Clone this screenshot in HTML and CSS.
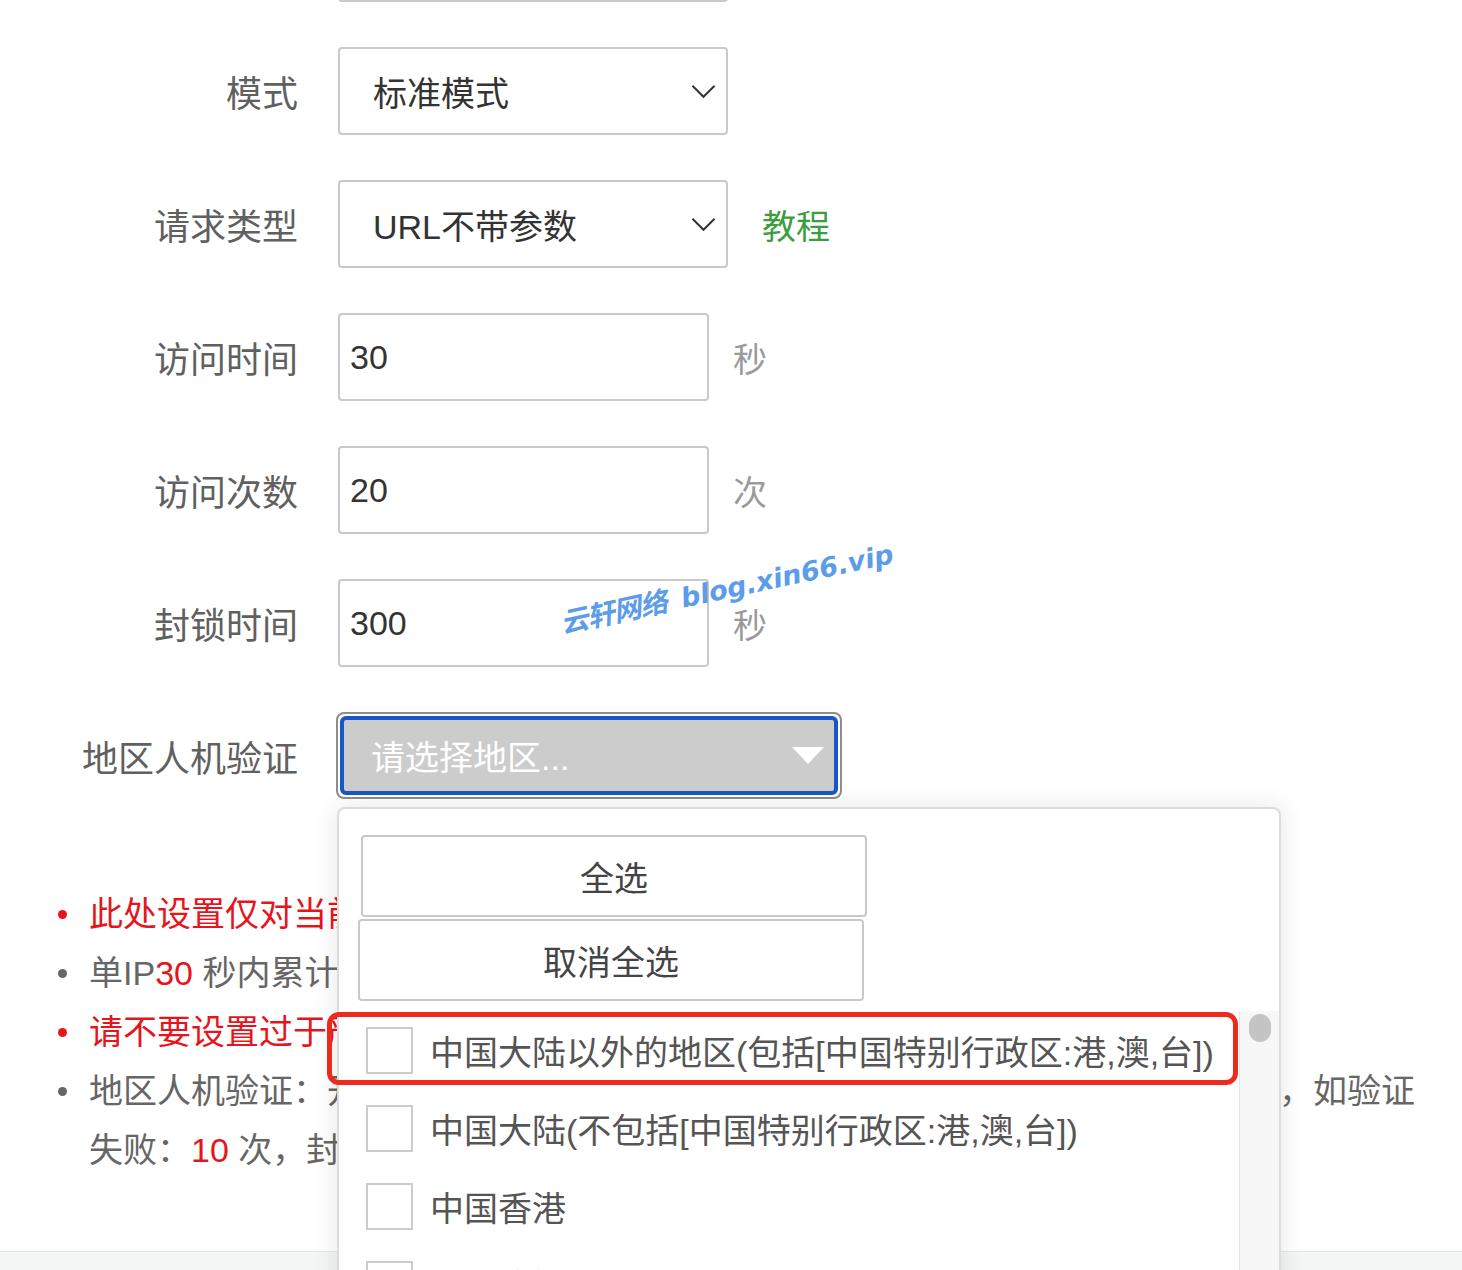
FILE: index.html
```html
<!DOCTYPE html>
<html lang="zh-CN">
<head>
<meta charset="utf-8">
<title>CC防御设置</title>
<link rel="stylesheet" href="styles.css">
</head>
<body>
<div class="page">
  <div class="form">
    <div class="row">
      <span class="label">防御模式</span>
      <div class="select">
        <span class="select-value">自定义</span>
        <svg class="chevron" viewBox="0 0 26 15"><path d="M1.5 1.5 L13 13 L24.5 1.5"/></svg>
      </div>
    </div>
    <div class="row">
      <span class="label">模式</span>
      <div class="select">
        <span class="select-value">标准模式</span>
        <svg class="chevron" viewBox="0 0 26 15"><path d="M1.5 1.5 L13 13 L24.5 1.5"/></svg>
      </div>
    </div>
    <div class="row">
      <span class="label">请求类型</span>
      <div class="select">
        <span class="select-value">URL不带参数</span>
        <svg class="chevron" viewBox="0 0 26 15"><path d="M1.5 1.5 L13 13 L24.5 1.5"/></svg>
      </div>
      <a class="link" href="#">教程</a>
    </div>
    <div class="row">
      <span class="label">访问时间</span>
      <div class="input">30</div>
      <span class="unit">秒</span>
    </div>
    <div class="row">
      <span class="label">访问次数</span>
      <div class="input">20</div>
      <span class="unit">次</span>
    </div>
    <div class="row">
      <span class="label">封锁时间</span>
      <div class="input">300</div>
      <span class="unit">秒</span>
    </div>
    <div class="row row-region">
      <span class="label">地区人机验证</span>
      <div class="region">
        <div class="region-inner">
          <span class="region-placeholder">请选择地区...</span>
          <svg class="caret" viewBox="0 0 32 17"><path d="M0 0 H32 L16 17 Z"/></svg>
        </div>
        <div class="dropdown">
          <div class="dropdown-actions">
            <button class="btn" type="button">全选</button>
            <button class="btn btn-shift" type="button">取消全选</button>
          </div>
          <div class="dropdown-list">
            <ul class="options">
              <li class="option"><span class="checkbox"></span>中国大陆以外的地区(包括[中国特别行政区:港,澳,台])</li>
              <li class="option"><span class="checkbox"></span>中国大陆(不包括[中国特别行政区:港,澳,台])</li>
              <li class="option"><span class="checkbox"></span>中国香港</li>
              <li class="option"><span class="checkbox"></span>中国澳门</li>
            </ul>
            <div class="scrollbar"><span class="thumb"></span></div>
          </div>
          <div class="highlight"></div>
        </div>
      </div>
    </div>
  </div>

  <ul class="notes">
    <li class="red">此处设置仅对当前网站有效，全局设置请前往CC防御页面</li>
    <li>单IP<em>30</em> 秒内累计请求同一URL超过 <em>20</em> 次，封锁 <em>300</em> 秒</li>
    <li class="red">请不要设置过于严格的规则，以免影响正常用户访问网站</li>
    <li>地区人机验证：开启后，所选地区访客访问网站时需要先完成人机验证才可访问，如验证失败：<em>10</em> 次，封锁 <em>600</em> 秒</li>
  </ul>

  <div class="footer"></div>

  <div class="watermark"><span class="wm-cn">云轩网络</span>&nbsp;&nbsp;<span class="wm-en">blog.xin66.vip</span></div>
</div>
</body>
</html>
```

FILE: styles.css
```css
* {
  box-sizing: border-box;
}

html, body {
  margin: 0;
  padding: 0;
  background: #fff;
  overflow: hidden;
}

body {
  font-family: "Liberation Sans", "Noto Sans CJK SC", sans-serif;
  color: #333;
}

.page {
  position: relative;
  width: 1462px;
  height: 1270px;
  overflow: hidden;
}

/* ---------- form rows ---------- */
.form {
  margin-top: -86px;
  display: flex;
  flex-direction: column;
  gap: 45px;
}

.row {
  display: flex;
  align-items: center;
  height: 88px;
}

.label {
  width: 298px;
  margin-right: 40px;
  text-align: right;
  font-size: 36px;
  color: #606060;
  flex: none;
}

.select {
  width: 390px;
  height: 88px;
  border: 2px solid #c9c9c9;
  border-radius: 4px;
  display: flex;
  align-items: center;
  justify-content: space-between;
  padding: 0 10px 0 33px;
  font-size: 34px;
  color: #333;
}

.chevron {
  width: 25px;
  height: 15px;
  fill: none;
  stroke: #333;
  stroke-width: 2;
}

.link {
  margin-left: 34px;
  font-size: 34px;
  color: #3a9e3e;
  text-decoration: none;
}

.input {
  width: 371px;
  height: 88px;
  border: 2px solid #c9c9c9;
  border-radius: 4px;
  display: flex;
  align-items: center;
  padding-left: 10px;
  font-size: 34px;
  color: #333;
}

.unit {
  margin-left: 24px;
  font-size: 34px;
  color: #9a9a9a;
}

/* ---------- region picker ---------- */
.row-region {
  height: 87px;
}

.region {
  position: relative;
  margin-left: -2px;
  width: 506px;
  height: 87px;
  border: 2px solid #8d8d8d;
  border-radius: 8px;
  padding: 2px;
  z-index: 2;
}

.region-inner {
  height: 100%;
  border: 4px solid #1b56c6;
  border-radius: 6px;
  background: #cccccc;
  display: flex;
  align-items: center;
  justify-content: space-between;
  padding: 0 10px 0 27px;
}

.region-placeholder {
  font-size: 34px;
  color: #fff;
}

.caret {
  width: 32px;
  height: 17px;
  fill: #fff;
}

.dropdown {
  position: absolute;
  left: -1px;
  top: 93px;
  width: 944px;
  height: 560px;
  background: #fff;
  border: 2px solid #dcdcdc;
  border-radius: 8px;
  box-shadow: 0 0 26px rgba(0, 0, 0, 0.10);
}

.dropdown-actions {
  padding: 26px 0 0 22px;
  display: flex;
  flex-direction: column;
  align-items: flex-start;
}

.btn {
  width: 506px;
  height: 82px;
  border: 2px solid #c8c8c8;
  border-radius: 4px;
  background: #fff;
  font-family: "Liberation Sans", "Noto Sans CJK SC", sans-serif;
  font-size: 34px;
  color: #444;
  padding: 0;
}

.btn-shift {
  margin-top: 2px;
  margin-left: -3px;
}

.dropdown-list {
  margin-top: 10px;
  display: flex;
  height: 420px;
}

.options {
  list-style: none;
  margin: 0;
  padding: 0;
  flex: 1;
}

.option {
  height: 78px;
  display: flex;
  align-items: center;
  padding-left: 27px;
  font-size: 34px;
  color: #555;
  white-space: nowrap;
}

.checkbox {
  width: 47px;
  height: 47px;
  border: 2px solid #cccccc;
  margin-right: 17px;
  flex: none;
}

.scrollbar {
  width: 40px;
  flex: none;
  background: #f7f7f7;
  border-left: 1px solid #e6e6e6;
  padding-top: 3px;
  display: flex;
  justify-content: center;
}

.thumb {
  width: 22px;
  height: 28px;
  border-radius: 11px;
  background: #c4c4c4;
}

.highlight {
  position: absolute;
  left: -12px;
  top: 203px;
  width: 911px;
  height: 73px;
  border: 5px solid #ee2a1f;
  border-radius: 12px;
}

/* ---------- notes ---------- */
.notes {
  list-style: none;
  margin: 86px 0 0 0;
  padding: 0 30px 0 89px;
  font-size: 34px;
  line-height: 59px;
  color: #666;
}

.notes li {
  position: relative;
}

.notes li::before {
  content: "";
  position: absolute;
  left: -31px;
  top: 25px;
  width: 9px;
  height: 9px;
  border-radius: 50%;
  background: currentColor;
}

.notes .red {
  color: #e8141c;
}

.notes em {
  font-style: normal;
  color: #e8141c;
}

.footer {
  margin-top: 71px;
  height: 80px;
  background: #f4f5f5;
  border-top: 1px solid #e7e8e8;
}

/* ---------- watermark ---------- */
.watermark {
  position: absolute;
  left: 556px;
  top: 602px;
  transform: rotate(-12deg);
  transform-origin: left top;
  font-size: 27px;
  font-weight: bold;
  font-style: italic;
  color: #5c9ce9;
  white-space: nowrap;
  z-index: 5;
}

.wm-cn {
  font-family: "Noto Sans CJK SC", sans-serif;
  font-size: 28px;
  letter-spacing: -1px;
}

.wm-en {
  font-family: "DejaVu Sans", sans-serif;
  letter-spacing: 0;
}
```
